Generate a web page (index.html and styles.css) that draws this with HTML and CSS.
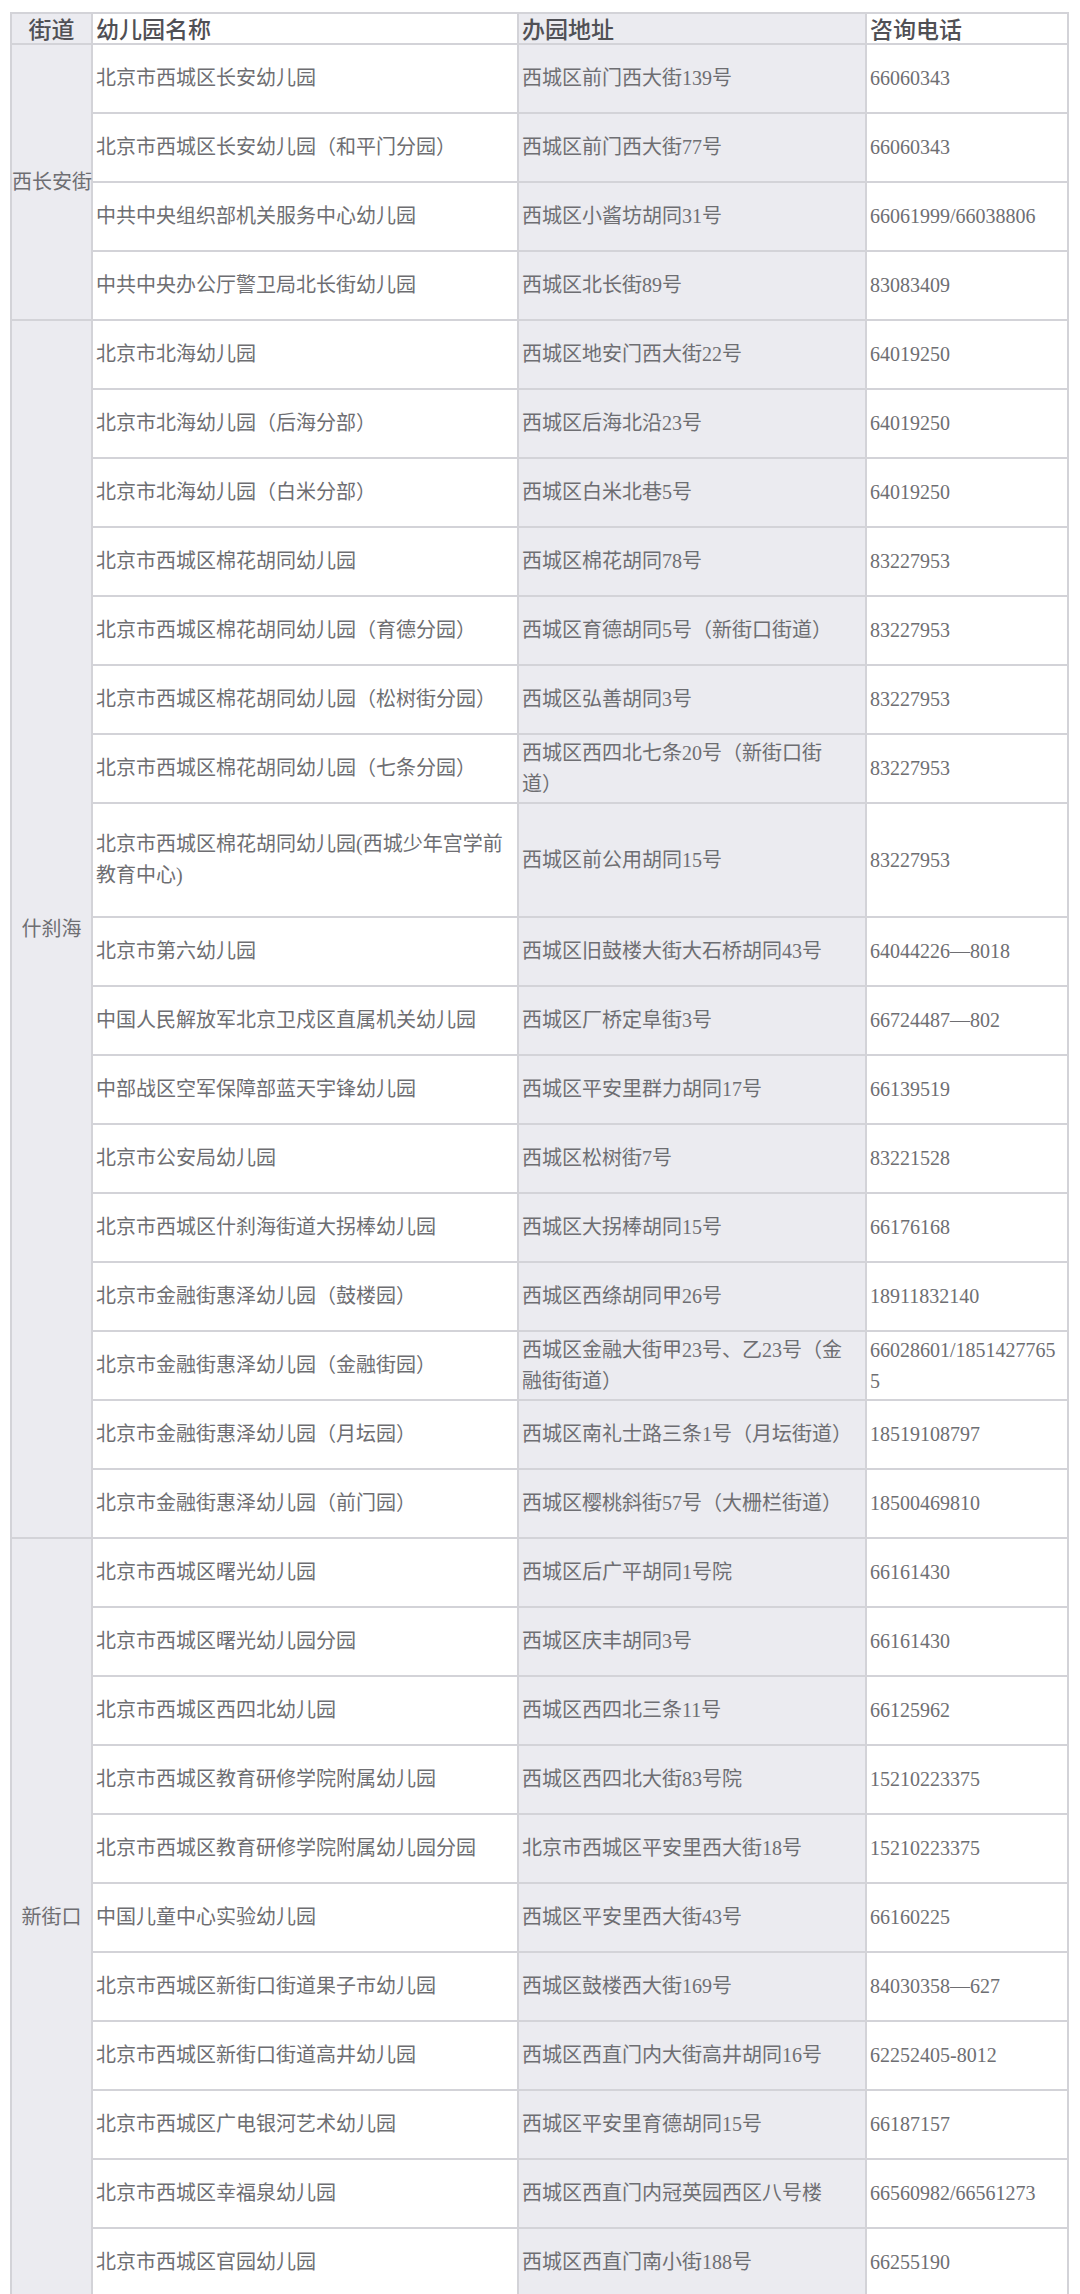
FILE: index.html
```html
<!DOCTYPE html>
<html lang="zh-CN">
<head>
<meta charset="utf-8">
<title>西城区幼儿园</title>
<link rel="stylesheet" href="styles.css">
</head>
<body>
<table class="kg">
  <colgroup>
    <col class="c-street">
    <col class="c-name">
    <col class="c-addr">
    <col class="c-tel">
  </colgroup>
  <thead>
    <tr class="head">
      <th class="street">街道</th>
      <th class="name">幼儿园名称</th>
      <th class="addr">办园地址</th>
      <th class="tel">咨询电话</th>
    </tr>
  </thead>
  <tbody>
    <tr><td class="street" rowspan="4">西长安街</td><td class="name">北京市西城区长安幼儿园</td><td class="addr">西城区前门西大街139号</td><td class="tel">66060343</td></tr>
    <tr><td class="name">北京市西城区长安幼儿园（和平门分园）</td><td class="addr">西城区前门西大街77号</td><td class="tel">66060343</td></tr>
    <tr><td class="name">中共中央组织部机关服务中心幼儿园</td><td class="addr">西城区小酱坊胡同31号</td><td class="tel">66061999/66038806</td></tr>
    <tr><td class="name">中共中央办公厅警卫局北长街幼儿园</td><td class="addr">西城区北长街89号</td><td class="tel">83083409</td></tr>

    <tr><td class="street" rowspan="17">什刹海</td><td class="name">北京市北海幼儿园</td><td class="addr">西城区地安门西大街22号</td><td class="tel">64019250</td></tr>
    <tr><td class="name">北京市北海幼儿园（后海分部）</td><td class="addr">西城区后海北沿23号</td><td class="tel">64019250</td></tr>
    <tr><td class="name">北京市北海幼儿园（白米分部）</td><td class="addr">西城区白米北巷5号</td><td class="tel">64019250</td></tr>
    <tr><td class="name">北京市西城区棉花胡同幼儿园</td><td class="addr">西城区棉花胡同78号</td><td class="tel">83227953</td></tr>
    <tr><td class="name">北京市西城区棉花胡同幼儿园（育德分园）</td><td class="addr">西城区育德胡同5号（新街口街道）</td><td class="tel">83227953</td></tr>
    <tr><td class="name">北京市西城区棉花胡同幼儿园（松树街分园）</td><td class="addr">西城区弘善胡同3号</td><td class="tel">83227953</td></tr>
    <tr><td class="name">北京市西城区棉花胡同幼儿园（七条分园）</td><td class="addr">西城区西四北七条20号（新街口街道）</td><td class="tel">83227953</td></tr>
    <tr class="tall"><td class="name">北京市西城区棉花胡同幼儿园(西城少年宫学前教育中心)</td><td class="addr">西城区前公用胡同15号</td><td class="tel">83227953</td></tr>
    <tr><td class="name">北京市第六幼儿园</td><td class="addr">西城区旧鼓楼大街大石桥胡同43号</td><td class="tel">64044226—8018</td></tr>
    <tr><td class="name">中国人民解放军北京卫戍区直属机关幼儿园</td><td class="addr">西城区厂桥定阜街3号</td><td class="tel">66724487—802</td></tr>
    <tr><td class="name">中部战区空军保障部蓝天宇锋幼儿园</td><td class="addr">西城区平安里群力胡同17号</td><td class="tel">66139519</td></tr>
    <tr><td class="name">北京市公安局幼儿园</td><td class="addr">西城区松树街7号</td><td class="tel">83221528</td></tr>
    <tr><td class="name">北京市西城区什刹海街道大拐棒幼儿园</td><td class="addr">西城区大拐棒胡同15号</td><td class="tel">66176168</td></tr>
    <tr><td class="name">北京市金融街惠泽幼儿园（鼓楼园）</td><td class="addr">西城区西绦胡同甲26号</td><td class="tel">18911832140</td></tr>
    <tr><td class="name">北京市金融街惠泽幼儿园（金融街园）</td><td class="addr">西城区金融大街甲23号、乙23号（金融街街道）</td><td class="tel">66028601/18514277655</td></tr>
    <tr><td class="name">北京市金融街惠泽幼儿园（月坛园）</td><td class="addr">西城区南礼士路三条1号（月坛街道）</td><td class="tel">18519108797</td></tr>
    <tr><td class="name">北京市金融街惠泽幼儿园（前门园）</td><td class="addr">西城区樱桃斜街57号（大栅栏街道）</td><td class="tel">18500469810</td></tr>

    <tr><td class="street" rowspan="11">新街口</td><td class="name">北京市西城区曙光幼儿园</td><td class="addr">西城区后广平胡同1号院</td><td class="tel">66161430</td></tr>
    <tr><td class="name">北京市西城区曙光幼儿园分园</td><td class="addr">西城区庆丰胡同3号</td><td class="tel">66161430</td></tr>
    <tr><td class="name">北京市西城区西四北幼儿园</td><td class="addr">西城区西四北三条11号</td><td class="tel">66125962</td></tr>
    <tr><td class="name">北京市西城区教育研修学院附属幼儿园</td><td class="addr">西城区西四北大街83号院</td><td class="tel">15210223375</td></tr>
    <tr><td class="name">北京市西城区教育研修学院附属幼儿园分园</td><td class="addr">北京市西城区平安里西大街18号</td><td class="tel">15210223375</td></tr>
    <tr><td class="name">中国儿童中心实验幼儿园</td><td class="addr">西城区平安里西大街43号</td><td class="tel">66160225</td></tr>
    <tr><td class="name">北京市西城区新街口街道果子市幼儿园</td><td class="addr">西城区鼓楼西大街169号</td><td class="tel">84030358—627</td></tr>
    <tr><td class="name">北京市西城区新街口街道高井幼儿园</td><td class="addr">西城区西直门内大街高井胡同16号</td><td class="tel">62252405-8012</td></tr>
    <tr><td class="name">北京市西城区广电银河艺术幼儿园</td><td class="addr">西城区平安里育德胡同15号</td><td class="tel">66187157</td></tr>
    <tr><td class="name">北京市西城区幸福泉幼儿园</td><td class="addr">西城区西直门内冠英园西区八号楼</td><td class="tel">66560982/66561273</td></tr>
    <tr><td class="name">北京市西城区官园幼儿园</td><td class="addr">西城区西直门南小街188号</td><td class="tel">66255190</td></tr>
  </tbody>
</table>
</body>
</html>
```
FILE: styles.css
```css
html, body {
  margin: 0;
  background: #ffffff;
}

body {
  padding: 12px 0 0 10px;
  font-family: "Liberation Serif", "Noto Sans CJK SC", serif;
  color: #6e6e72;
}

.kg {
  border-collapse: collapse;
  table-layout: fixed;
  width: 1057px;
}

.c-street { width: 81px; }
.c-name { width: 426px; }
.c-addr { width: 348px; }
.c-tel { width: 202px; }

.kg th,
.kg td {
  border: 2px solid #d3d3d8;
  padding: 0 3px;
  text-align: left;
  vertical-align: middle;
}

.kg th {
  height: 29px;
  font-family: "Noto Sans CJK SC", sans-serif;
  font-size: 23px;
  font-weight: 500;
  line-height: 29px;
  color: #505055;
  white-space: nowrap;
}

.kg td {
  height: 67px;
  font-size: 20px;
  line-height: 31px;
}

.kg tr.tall td {
  height: 112px;
}

.kg .street {
  padding: 0;
  text-align: center;
  white-space: nowrap;
  background: #ebebf0;
}

.kg td.addr {
  padding-right: 18px;
}

.kg .addr {
  background: #ebebf0;
}

.kg .name,
.kg .tel {
  background: #ffffff;
}

.kg td.tel {
  padding-right: 6px;
  word-break: break-all;
}
```
